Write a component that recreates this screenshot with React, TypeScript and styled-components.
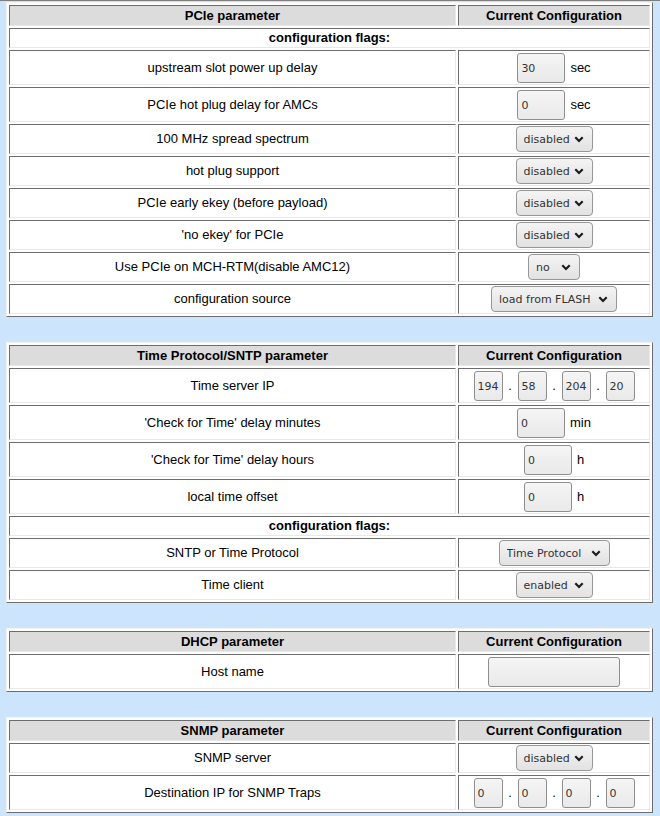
import React from 'react';
import styled, { createGlobalStyle } from 'styled-components';

type Control =
  | { kind: 'input'; value: string; unit?: string; width?: number }
  | { kind: 'select'; value: string; options: string[]; width: number }
  | { kind: 'ip'; parts: string[] };

type Row = { label: string; control: Control } | { flags: true };

interface Section {
  title: string;
  rows: Row[];
}

const onOff = ['disabled', 'enabled'];

const sections: Section[] = [
  {
    title: 'PCIe parameter',
    rows: [
      { flags: true },
      { label: 'upstream slot power up delay', control: { kind: 'input', value: '30', unit: 'sec' } },
      { label: 'PCIe hot plug delay for AMCs', control: { kind: 'input', value: '0', unit: 'sec' } },
      { label: '100 MHz spread spectrum', control: { kind: 'select', value: 'disabled', options: onOff, width: 77 } },
      { label: 'hot plug support', control: { kind: 'select', value: 'disabled', options: onOff, width: 77 } },
      { label: 'PCIe early ekey (before payload)', control: { kind: 'select', value: 'disabled', options: onOff, width: 77 } },
      { label: "'no ekey' for PCIe", control: { kind: 'select', value: 'disabled', options: onOff, width: 77 } },
      { label: 'Use PCIe on MCH-RTM(disable AMC12)', control: { kind: 'select', value: 'no', options: ['no', 'yes'], width: 52 } },
      {
        label: 'configuration source',
        control: { kind: 'select', value: 'load from FLASH', options: ['load from FLASH', 'use defaults'], width: 126 },
      },
    ],
  },
  {
    title: 'Time Protocol/SNTP parameter',
    rows: [
      { label: 'Time server IP', control: { kind: 'ip', parts: ['194', '58', '204', '20'] } },
      { label: "'Check for Time' delay minutes", control: { kind: 'input', value: '0', unit: 'min' } },
      { label: "'Check for Time' delay hours", control: { kind: 'input', value: '0', unit: 'h' } },
      { label: 'local time offset', control: { kind: 'input', value: '0', unit: 'h' } },
      { flags: true },
      {
        label: 'SNTP or Time Protocol',
        control: { kind: 'select', value: 'Time Protocol', options: ['Time Protocol', 'SNTP'], width: 111 },
      },
      { label: 'Time client', control: { kind: 'select', value: 'enabled', options: onOff, width: 77 } },
    ],
  },
  {
    title: 'DHCP parameter',
    rows: [{ label: 'Host name', control: { kind: 'input', value: '', width: 132 } }],
  },
  {
    title: 'SNMP parameter',
    rows: [
      { label: 'SNMP server', control: { kind: 'select', value: 'disabled', options: onOff, width: 77 } },
      { label: 'Destination IP for SNMP Traps', control: { kind: 'ip', parts: ['0', '0', '0', '0'] } },
    ],
  },
];

const GlobalStyle = createGlobalStyle`
  * { box-sizing: border-box; }
  html, body {
    margin: 0;
    background: #cce4fc;
  }
  body {
    font-family: "Liberation Sans", Arial, sans-serif;
    font-size: 13px;
    color: #000;
  }
`;

const Page = styled.div`
  border-top: 1px solid #7d7d7d;
  padding: 1px 7px 0 6px;
  display: flex;
  flex-direction: column;
  gap: 25px;
`;

const ParamTable = styled.table`
  width: 647px;
  border-collapse: separate;
  border-spacing: 2px;
  background: #fff;
  border: 1px solid;
  border-color: #f3f3f3 #6d6d6d #6d6d6d #f3f3f3;
`;

const cellBorder = `
  border: 1px solid;
  border-color: #6d6d6d #e8e8e8 #e8e8e8 #6d6d6d;
  padding: 1px;
  text-align: center;
  vertical-align: middle;
`;

const HeadCell = styled.th<{ $right?: boolean }>`
  ${cellBorder}
  background: #dcdcdc;
  font-weight: bold;
  font-size: 13px;
  line-height: 17px;
  width: ${(p) => (p.$right ? '192px' : 'auto')};
`;

const Cell = styled.td`
  ${cellBorder}
  line-height: 16px;
`;

const FlagsCell = styled(Cell)`
  font-weight: bold;
`;

const ControlLine = styled.div`
  display: inline-flex;
  align-items: center;
  gap: 5px;
  vertical-align: middle;
`;

const TextBox = styled.input<{ $w: number }>`
  width: ${(p) => p.$w}px;
  height: 30px;
  margin: 1px 0 0;
  padding: 0 3px;
  border: 1px solid #8e8e8e;
  border-radius: 3px;
  background: linear-gradient(to bottom, #f5f5f5, #e9e9e9);
  font-family: "DejaVu Sans", sans-serif;
  font-size: 11px;
  color: #333;
  outline: none;
`;

const Unit = styled.span`
  font-size: 13px;
`;

const Dot = styled.span`
  width: 5px;
  text-align: center;
  font-size: 13px;
`;

const IpLine = styled(ControlLine)`
  gap: 5px;
`;

const SelectWrap = styled.span`
  position: relative;
  display: inline-flex;
  vertical-align: middle;
`;

const Dropdown = styled.select<{ $w: number }>`
  appearance: none;
  -webkit-appearance: none;
  width: ${(p) => p.$w}px;
  height: 26px;
  margin: 0;
  padding: 0 20px 0 7px;
  border: 1px solid #979797;
  border-radius: 4px;
  background: linear-gradient(to bottom, #f4f4f4, #e2e2e2);
  font-family: "DejaVu Sans", sans-serif;
  font-size: 11px;
  color: #333;
  outline: none;
`;

const Chevron = styled.svg`
  position: absolute;
  right: 9px;
  top: 10px;
  pointer-events: none;
`;

const ChevronDown = () => (
  <Chevron width="10" height="7" viewBox="0 0 10 7">
    <path d="M1.3 1.3 L5 5 L8.7 1.3" fill="none" stroke="#1c1c1c" strokeWidth="2.2" strokeLinejoin="miter" />
  </Chevron>
);

const renderControl = (c: Control) => {
  if (c.kind === 'input') {
    return (
      <ControlLine>
        <TextBox type="text" $w={c.width ?? 48} defaultValue={c.value} />
        {c.unit && <Unit>{c.unit}</Unit>}
      </ControlLine>
    );
  }
  if (c.kind === 'select') {
    return (
      <SelectWrap>
        <Dropdown $w={c.width} defaultValue={c.value}>
          {c.options.map((o) => (
            <option key={o}>{o}</option>
          ))}
        </Dropdown>
        <ChevronDown />
      </SelectWrap>
    );
  }
  return (
    <IpLine>
      {c.parts.map((p, i) => (
        <React.Fragment key={i}>
          {i > 0 && <Dot>.</Dot>}
          <TextBox type="text" $w={29} defaultValue={p} />
        </React.Fragment>
      ))}
    </IpLine>
  );
};

const App = () => {
  return (
    <>
      <GlobalStyle />
      <Page>
        {sections.map((s) => (
          <ParamTable key={s.title}>
            <tbody>
              <tr>
                <HeadCell>{s.title}</HeadCell>
                <HeadCell $right>Current Configuration</HeadCell>
              </tr>
              {s.rows.map((r, i) =>
                'flags' in r ? (
                  <tr key={i}>
                    <FlagsCell colSpan={2}>configuration flags:</FlagsCell>
                  </tr>
                ) : (
                  <tr key={i}>
                    <Cell>{r.label}</Cell>
                    <Cell>{renderControl(r.control)}</Cell>
                  </tr>
                )
              )}
            </tbody>
          </ParamTable>
        ))}
      </Page>
    </>
  );
};

export default App;
